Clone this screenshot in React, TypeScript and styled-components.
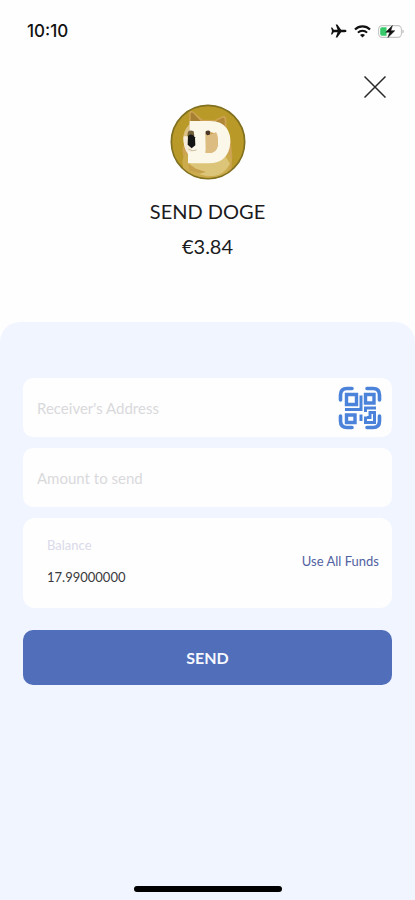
import React, { useState } from "react";
import styled, { createGlobalStyle } from "styled-components";

const GlobalStyle = createGlobalStyle`
  *, *::before, *::after { box-sizing: border-box; }
  body { margin: 0; background: #fefefe; font-family: Lato, "Open Sans", sans-serif; }
  button, input { font: inherit; }
`;

const Screen = styled.div`
  display: flex;
  flex-direction: column;
  min-height: 100vh;
  background: #fefefe;
  color: #1b1b1d;
`;

const StatusBar = styled.header`
  display: flex;
  align-items: center;
  justify-content: space-between;
  height: 62px;
  padding: 0 11px 0 27px;
`;

const Clock = styled.time`
  font-family: Inter, sans-serif;
  font-size: 17px;
  font-weight: 500;
  line-height: 20px;
  color: #111;
`;

const StatusIcons = styled.div`
  display: flex;
  align-items: center;
  gap: 7px;
`;

const TopBar = styled.div`
  display: flex;
  justify-content: flex-end;
  height: 42px;
  padding: 3px 18px 0;
`;

const CloseButton = styled.button`
  display: grid;
  place-items: center;
  width: 44px;
  height: 44px;
  padding: 0;
  border: 0;
  background: none;
  cursor: pointer;
`;

const Summary = styled.section`
  display: flex;
  flex-direction: column;
  align-items: center;
  padding-bottom: 64px;
`;

const Title = styled.h1`
  margin: 19px 0 0;
  font-size: 20px;
  font-weight: 400;
  line-height: 24px;
`;

const Fiat = styled.p`
  margin: 11px 0 0;
  font-size: 20px;
  line-height: 24px;
`;

const Panel = styled.main`
  display: flex;
  flex: 1;
  flex-direction: column;
  padding: 56px 23px 8px;
  border-radius: 20px 20px 0 0;
  background: #f1f5ff;
`;

const Form = styled.form`
  display: flex;
  flex-direction: column;
  gap: 11px;
`;

const Field = styled.div`
  display: flex;
  align-items: center;
  height: 59px;
  padding: 0 10px 0 14px;
  border-radius: 10px;
  background: #fefefe;
`;

const TextInput = styled.input`
  flex: 1;
  min-width: 0;
  padding: 0;
  border: 0;
  outline: 0;
  background: none;
  font-size: 15px;
  line-height: 20px;
  color: #333;
  &::placeholder { color: #d9d9dc; opacity: 1; }
`;

const ScanButton = styled.button`
  display: flex;
  padding: 0;
  border: 0;
  background: none;
  color: #4b82da;
  cursor: pointer;
`;

const BalanceCard = styled.div`
  display: flex;
  align-items: center;
  justify-content: space-between;
  height: 90px;
  padding: 0 13px 4px 24px;
  border-radius: 12px;
  background: #fefefe;
`;

const Balance = styled.dl`
  display: flex;
  flex-direction: column;
  gap: 16px;
  margin: 0;
`;

const BalanceLabel = styled.dt`
  font-size: 13px;
  line-height: 16px;
  color: #dadaea;
`;

const BalanceValue = styled.dd`
  margin: 0;
  font-size: 13px;
  line-height: 16px;
  color: #3a3a3c;
`;

const AllFundsButton = styled.button`
  padding: 0;
  border: 0;
  background: none;
  font-size: 13px;
  line-height: 20px;
  color: #5262a2;
  cursor: pointer;
`;

const SendButton = styled.button`
  height: 55px;
  margin-top: 11px;
  border: 0;
  border-radius: 10px;
  background: #506eb9;
  font-size: 16px;
  font-weight: 700;
  line-height: 20px;
  color: #f6f8ff;
  cursor: pointer;
`;

const HomeIndicator = styled.div`
  align-self: center;
  width: 148px;
  height: 6px;
  margin-top: auto;
  border-radius: 3px;
  background: #000;
`;

const PlaneIcon = () => (
  <svg width="17" height="14" viewBox="0 0 17 14" aria-hidden="true">
    <path
      d="M16.5 7c0-.8-.9-1.2-2-1.2h-3.400L7.300.5H5.700l1.900 5.300H3.800L2.200 3.600H1L2 7l-1 3.400h1.200l1.600-2.200h3.800l-1.900 5.300h1.600l3.800-5.300h3.400c1.100 0 2-.4 2-1.200z"
      fill="#111"
    />
  </svg>
);

const WifiIcon = () => (
  <svg width="17" height="13" viewBox="0 0 17 13" fill="none" stroke="#111" aria-hidden="true">
    <path d="M1 4.500a10.700 10.700 0 0 1 15 0" strokeWidth="2.200" />
    <path d="M3.900 7.600a6.600 6.600 0 0 1 9.200 0" strokeWidth="2" />
    <path d="M8.500 12.600 6 10.100a3.600 3.600 0 0 1 5 0z" fill="#111" stroke="none" />
  </svg>
);

const BatteryIcon = () => (
  <svg width="26" height="13" viewBox="0 0 26 13" aria-hidden="true">
    <rect x=".6" y=".6" width="22.800" height="11.800" rx="3.600" fill="#fff" stroke="#c4c7c4" strokeWidth="1.100" />
    <path d="M24.500 4.400c1.500.7 1.500 3.500 0 4.200z" fill="#aaa" />
    <path d="M4 2.200h4.500v8.600H4A1.800 1.800 0 0 1 2.200 9V4A1.800 1.800 0 0 1 4 2.200z" fill="#35c969" />
    <path d="M14.400.6 7.700 7.200h4L9.900 12.500l6.900-6.800h-4z" fill="#111" stroke="#111" strokeWidth=".5" />
  </svg>
);

const CloseIcon = () => (
  <svg width="22" height="22" viewBox="0 0 22 22" fill="none" stroke="#29292b" strokeWidth="1.500" aria-hidden="true">
    <path d="M.5.5l21 21M21.500.5l-21 21" />
  </svg>
);

const DogeCoin = () => (
  <svg width="76" height="76" viewBox="32 29 228 228" role="img" aria-label="Dogecoin">
    <defs>
      <clipPath id="coinFace">
        <circle cx="146" cy="143" r="108" />
      </clipPath>
    </defs>
    <circle cx="146" cy="143" r="110" fill="#b99a28" stroke="#80701f" strokeWidth="5" />
    <g clipPath="url(#coinFace)">
      <path d="M89 92 90 55q2-10 12-3l28 24 36 1 25-12q9-3 10 10l1 32 12 29 5 48-3 45H78l-9-63z" fill="#cda252" />
      <path d="M94 80V58q2-7 9 0l21 22z" fill="#a67f32" />
      <path d="M168 82l22-12q6-1 6 10v24z" fill="#b08637" />
      <path d="M72 125q5-27 24-40l41-2-8 80-32 24q-25-13-25-62z" fill="#dcc184" />
      <path d="M77 177l55 26 76-28 10 21-18 58H75l-6-54z" fill="#ccab4c" />
      <path d="M92 200l106-14 14 22q-18 34-50 37-41 3-68-22z" fill="#dcc578" />
      <path d="M88 208l22 15 30 10-20 5-30-11z" fill="#c6a04a" />
      <path d="M72 128q6-6 14 0l20 22 32-16 2 34-34 26q-34-14-34-66z" fill="#f5edda" />
      <path
        fillRule="evenodd"
        d="M91 80h61q35 0 50 22 12 17 11 42-2 35-23 51-15 12-41 12H86v-35h13v-59h-8zM139 113v63h14q23-2 23-32 0-31-25-31z"
        fill="#fbf7e9"
      />
      <path d="M139 119q16 5 31-6 7 10 6 31-1 31-24 32h-13z" fill="#dcbc80" />
      <path d="M139 111q9-5 14 1l-2 9-7 2-5-4z" fill="#4a3827" />
      <path d="M86 112q7-7 17-1l2 13-9 5-12-4z" fill="#73613c" />
      <path d="M86 125q12-10 21 4l1 24-11 9-12-11z" fill="#151613" />
      <path d="M87 164q10 9 25 3" fill="none" stroke="#cdbf9f" strokeWidth="3" />
    </g>
  </svg>
);

const QrIcon = () => (
  <svg width="44" height="44" viewBox="0 0 44 44" fill="none" stroke="currentColor" strokeWidth="3" aria-hidden="true">
    <path
      d="M2.500 14V9q0-6.500 6.500-6.500h5M29 2.500h6q6.500 0 6.500 6.500v5M41.500 30v5q0 6.500-6.500 6.500h-6M14 41.500H9q-6.500 0-6.500-6.500v-5"
      strokeWidth="3.600"
      strokeLinecap="round"
    />
    <path d="M8.500 8.500h10v10h-10zM27.500 8.500h8.500v8.500h-8.500zM8.500 29h8.500v7.500h-8.500z" strokeWidth="3.400" />
    <path d="M23 9.500v14H7M23 28.500v6.500M38 22H27.500v4M32 26.500h4.500v10h-9v-6M32 25v6.500h-3" />
  </svg>
);

export default function App() {
  const [address, setAddress] = useState("");
  const [amount, setAmount] = useState("");

  return (
    <>
      <GlobalStyle />
      <Screen>
        <StatusBar>
          <Clock>10:10</Clock>
          <StatusIcons>
            <PlaneIcon />
            <WifiIcon />
            <BatteryIcon />
          </StatusIcons>
        </StatusBar>
        <TopBar>
          <CloseButton type="button" aria-label="Close">
            <CloseIcon />
          </CloseButton>
        </TopBar>
        <Summary>
          <DogeCoin />
          <Title>SEND DOGE</Title>
          <Fiat>€3.84</Fiat>
        </Summary>
        <Panel>
          <Form onSubmit={(event: React.FormEvent) => event.preventDefault()}>
            <Field>
              <TextInput
                aria-label="Receiver's Address"
                placeholder="Receiver's Address"
                value={address}
                onChange={(event) => setAddress(event.target.value)}
              />
              <ScanButton type="button" aria-label="Scan QR code">
                <QrIcon />
              </ScanButton>
            </Field>
            <Field>
              <TextInput
                aria-label="Amount to send"
                placeholder="Amount to send"
                inputMode="decimal"
                value={amount}
                onChange={(event) => setAmount(event.target.value)}
              />
            </Field>
            <BalanceCard>
              <Balance>
                <BalanceLabel>Balance</BalanceLabel>
                <BalanceValue>17.99000000</BalanceValue>
              </Balance>
              <AllFundsButton type="button" onClick={() => setAmount("17.99000000")}>
                Use All Funds
              </AllFundsButton>
            </BalanceCard>
            <SendButton type="submit">SEND</SendButton>
          </Form>
          <HomeIndicator />
        </Panel>
      </Screen>
    </>
  );
}
